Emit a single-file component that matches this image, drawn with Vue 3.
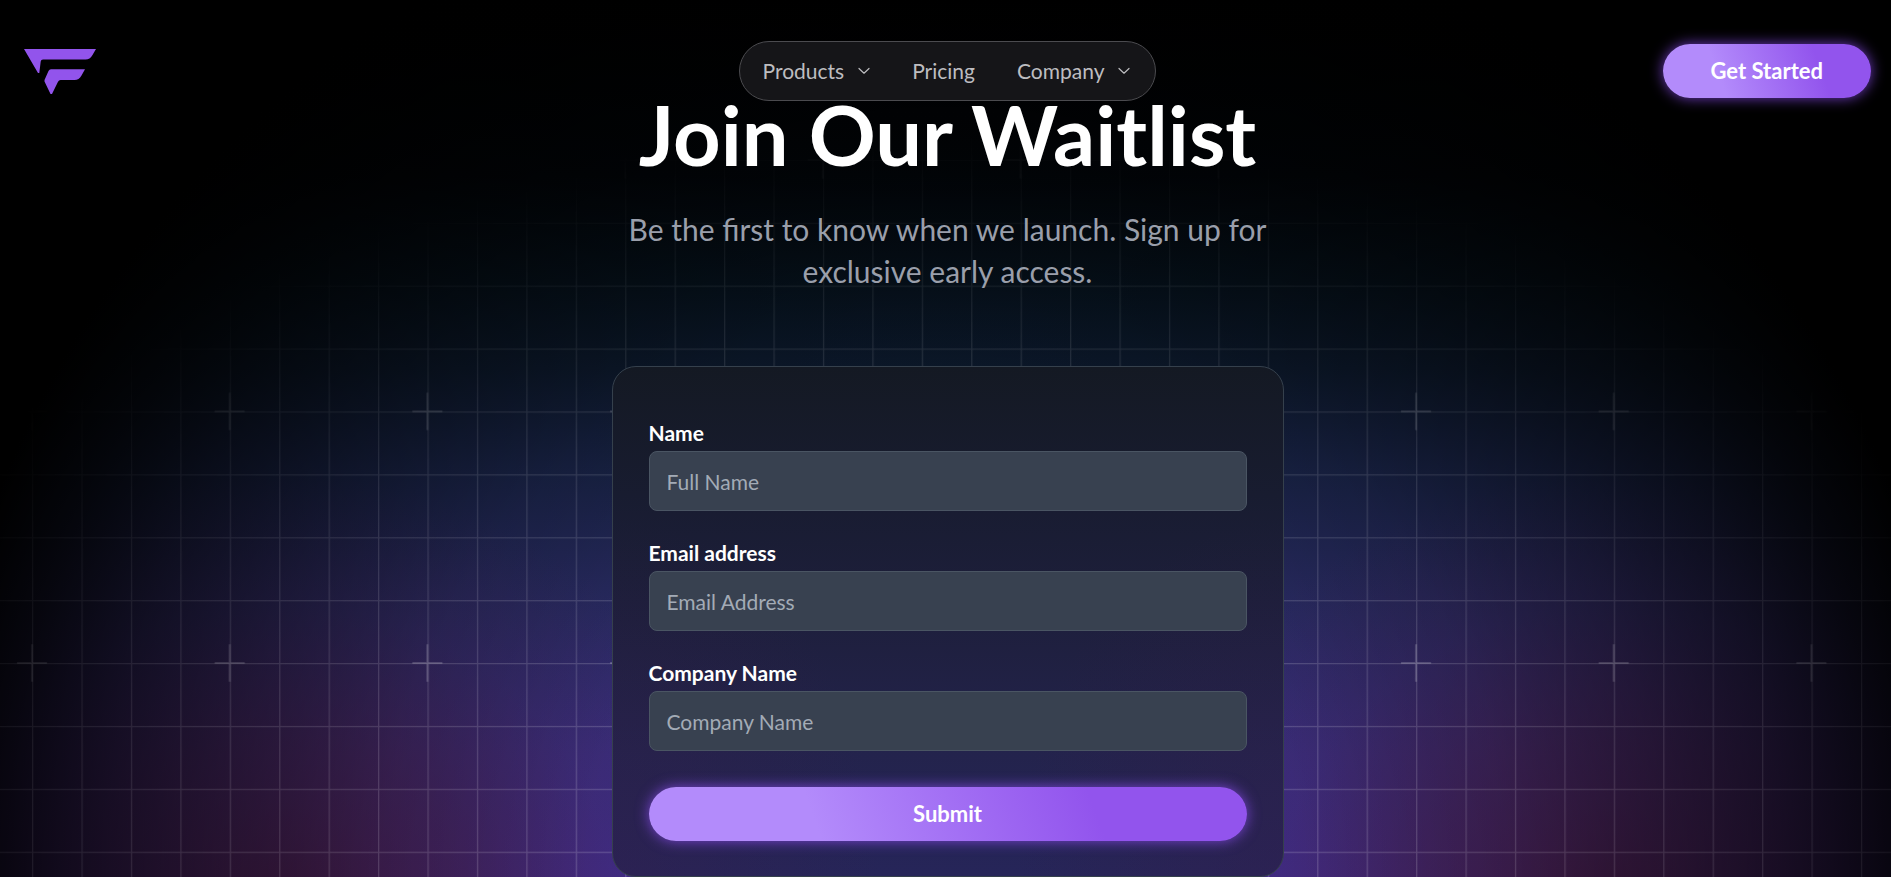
<script setup>
import { reactive } from 'vue'

const links = [
  { label: 'Products', menu: true },
  { label: 'Pricing', menu: false },
  { label: 'Company', menu: true },
]

const fields = [
  { id: 'name', label: 'Name', placeholder: 'Full Name', type: 'text' },
  { id: 'email', label: 'Email address', placeholder: 'Email Address', type: 'email' },
  { id: 'company', label: 'Company Name', placeholder: 'Company Name', type: 'text' },
]

const form = reactive({ name: '', email: '', company: '' })
</script>

<template>
  <div class="page">
    <svg class="grid" viewBox="0 0 1891 877" preserveAspectRatio="none" aria-hidden="true">
      <defs>
        <pattern id="cells" x="32" y="34" width="49.43" height="62.9" patternUnits="userSpaceOnUse">
          <path d="M0 0H49.43M0 0V62.9" fill="none" stroke="#fff" stroke-opacity=".2" stroke-width="2.6" />
        </pattern>
        <pattern id="crosses" x="-67" y="34" width="197.72" height="251.6" patternUnits="userSpaceOnUse">
          <path d="M84 125.8H114M99 107V144.6" fill="none" stroke="#fff" stroke-opacity=".26" stroke-width="2" />
        </pattern>
      </defs>
      <rect width="1891" height="877" fill="url(#cells)" />
      <rect width="1891" height="877" fill="url(#crosses)" />
    </svg>

    <header class="header">
      <a class="logo" href="#" aria-label="Home">
        <svg width="72" height="45" viewBox="0 0 72 45" fill="#9254ec" aria-hidden="true">
          <path d="M0 0H72L68.500 6Q66 10.500 61.500 10.500H19Q17 10.500 16.700 12.500L15.300 24H14Z" />
          <path d="M27 20.300H61L57.500 26.500Q55 31 50.500 31H36.500Q34.800 31 34 32.800L28 45H26.500L20.500 32.500V31L24.500 22Q25.300 20.300 27 20.300Z" />
        </svg>
      </a>
      <nav class="nav" aria-label="Main">
        <template v-for="link in links" :key="link.label">
          <button v-if="link.menu" type="button" class="nav-item" aria-haspopup="true">
            {{ link.label }}
            <svg class="chevron" width="12" height="8" viewBox="0 0 12 8" fill="none" stroke="currentColor" stroke-width="1.200" stroke-linecap="round" stroke-linejoin="round" aria-hidden="true">
              <path d="M1 1.500L6 6.200L11 1.500" />
            </svg>
          </button>
          <a v-else href="#" class="nav-item">{{ link.label }}</a>
        </template>
      </nav>
      <button type="button" class="cta get-started">Get Started</button>
    </header>

    <main class="main">
      <h1>Join Our Waitlist</h1>
      <p class="lead">Be the first to know when we launch. Sign up for exclusive early access.</p>
      <form class="card" @submit.prevent>
        <div v-for="f in fields" :key="f.id" class="field">
          <label :for="f.id">{{ f.label }}</label>
          <input :id="f.id" v-model="form[f.id]" :type="f.type" :placeholder="f.placeholder" />
        </div>
        <button type="submit" class="cta submit">Submit</button>
      </form>
    </main>
  </div>
</template>

<style>
body {
  margin: 0;
  background: #000;
}
</style>

<style scoped>
.page {
  position: relative;
  box-sizing: border-box;
  min-height: 100vh;
  overflow: hidden;
  color: #fff;
  font-family: Lato, "Liberation Sans", sans-serif;
  background:
    radial-gradient(ellipse 54% 118% at 50% 100%, transparent 35%, rgba(0, 0, 0, 0.18) 55%, rgba(0, 0, 0, 0.42) 70%, rgba(0, 0, 0, 0.64) 82%, rgba(0, 0, 0, 0.85) 92%, #000 100%),
    radial-gradient(ellipse 25% 50% at 15% 104%, rgba(72, 22, 44, 0.7), rgba(72, 28, 60, 0.5) 40%, rgba(70, 34, 80, 0.22) 70%, transparent),
    radial-gradient(ellipse 25% 50% at 85% 104%, rgba(72, 22, 44, 0.7), rgba(72, 28, 60, 0.5) 40%, rgba(70, 34, 80, 0.22) 70%, transparent),
    linear-gradient(#000 0%, #02060b 20%, #06121d 32%, #0d1a2e 42%, #1a2449 54%, #2a2b64 70%, #382d7e 86%, #3e2c8c 100%);
}

.page * {
  box-sizing: border-box;
}

.grid {
  position: absolute;
  inset: 0;
  width: 100%;
  height: 100%;
  -webkit-mask-image: radial-gradient(ellipse 62% 86% at 50% 100%, #000 20%, rgba(0, 0, 0, 0.6) 65%, transparent 100%);
  mask-image: radial-gradient(ellipse 62% 86% at 50% 100%, #000 20%, rgba(0, 0, 0, 0.6) 65%, transparent 100%);
}

.header {
  position: absolute;
  z-index: 2;
  top: 0;
  left: 0;
  right: 0;
  display: grid;
  grid-template-columns: 1fr auto 1fr;
  align-items: center;
  padding: 41px 20px 0 24px;
}

.logo {
  display: flex;
  justify-self: start;
}

.nav {
  display: flex;
  align-items: center;
  gap: 42px;
  height: 60px;
  padding: 0 25px 0 23px;
  border: 1px solid #4b4b4f;
  border-radius: 30px;
  background: #151518;
}

.nav-item {
  display: flex;
  align-items: center;
  gap: 14px;
  padding: 0;
  border: 0;
  background: none;
  color: #bdbdc0;
  font: 400 21px/30px Lato, "Liberation Sans", sans-serif;
  text-decoration: none;
  cursor: pointer;
}

.cta {
  height: 54px;
  border: 0;
  border-radius: 27px;
  background: linear-gradient(70deg, #b38bfb 28%, #9254ed 74%);
  box-shadow: 0 0 14px rgba(140, 76, 240, 0.8);
  color: #fff;
  font: 700 22px/30px Lato, "Liberation Sans", sans-serif;
  cursor: pointer;
}

.get-started {
  justify-self: end;
  padding: 0 48px;
}

.main {
  position: relative;
  display: flex;
  flex-direction: column;
  align-items: center;
  padding: 86px 24px 0 28px;
}

h1 {
  margin: 0;
  font-size: 83px;
  line-height: 96px;
  font-weight: 700;
  text-align: center;
}

.lead {
  max-width: 672px;
  margin: 26px 0 0;
  color: #9a9fab;
  font-size: 30px;
  line-height: 42px;
  text-align: center;
}

.card {
  display: flex;
  flex-direction: column;
  gap: 24px;
  width: 100%;
  max-width: 672px;
  margin-top: 74px;
  padding: 51px 36px 35px;
  border: 1px solid #35404c;
  border-radius: 24px;
  background:
    radial-gradient(ellipse 40% 70% at 0% 100%, rgba(54, 28, 72, 0.35), transparent),
    radial-gradient(ellipse 40% 70% at 100% 100%, rgba(54, 28, 72, 0.35), transparent),
    linear-gradient(#141923 0%, #181c30 25%, #1e1f3d 50%, #23234c 75%, #262559 100%);
}

.field {
  display: flex;
  flex-direction: column;
  gap: 3px;
}

.field + .field {
  margin-top: 3px;
}

.field label {
  align-self: flex-start;
  font-size: 21px;
  line-height: 30px;
  font-weight: 700;
}

.field input {
  width: 100%;
  height: 60px;
  padding: 0 17px;
  border: 1px solid #4a5563;
  border-radius: 8px;
  background: #384150;
  color: #fff;
  font: 400 21px/30px Lato, "Liberation Sans", sans-serif;
}

.field input::placeholder {
  color: #a3abb6;
  opacity: 1;
}

.submit {
  margin-top: 12px;
}
</style>
